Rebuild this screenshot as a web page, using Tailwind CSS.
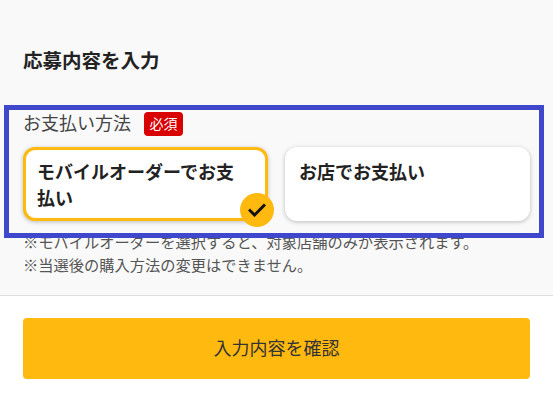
<!DOCTYPE html>
<html lang="ja">
<head>
    <meta charset="UTF-8">
    <meta name="viewport" content="width=device-width, initial-scale=1.0">
    <title>応募内容を入力</title>
    <script src="https://cdn.jsdelivr.net/npm/@tailwindcss/browser@4"></script>
</head>
<body class="relative h-[407px] w-[553px] overflow-hidden bg-white font-['Roboto','Noto_Sans_CJK_JP',sans-serif] text-[#333]">
    <!-- form -->
    <section class="h-[296px] border-b border-[#ddd] bg-[#f9f9f9] px-[23px] pt-[50px]">
        <h2 class="text-[19.5px] leading-[24px] font-bold text-[#222]">応募内容を入力</h2>
        <div class="mt-[37px] flex h-[26px] items-center gap-[13px]">
            <span class="text-[18px] leading-[24px] text-[#444]">お支払い方法</span>
            <span class="flex h-[24px] w-[39px] items-center justify-center rounded-[4px] bg-[#d90000] text-[14px] text-white">必須</span>
        </div>
        <div class="mt-[10px] flex gap-[17px]">
            <div class="relative h-[74px] w-[245px] rounded-[12px] border-[3px] border-[#ffb90f] bg-white pt-[10px] pr-[28px] pl-[11px] shadow-[0_1px_4px_rgba(0,0,0,0.25)]">
                <p class="text-[18px] leading-[26px] font-bold text-[#222]">モバイルオーダーでお支払い</p>
                <span class="absolute right-[-9px] bottom-[-9px] flex h-[34px] w-[34px] items-center justify-center rounded-full bg-[#ffb90f]">
                    <svg class="h-[14px] w-[18px]" viewBox="0 0 18 14" fill="none" stroke="#111" stroke-width="3"><path d="M1 6.5l5.5 5.5L17 1.5"/></svg>
                </span>
            </div>
            <div class="h-[74px] w-[245px] rounded-[12px] bg-white px-[14px] pt-[13px] shadow-[0_1px_4px_rgba(0,0,0,0.25)]">
                <p class="text-[18px] leading-[26px] font-bold text-[#222]">お店でお支払い</p>
            </div>
        </div>
        <div class="mt-[11px] text-[15.25px] leading-[23px] text-[#555]">
            <p>※モバイルオーダーを選択すると、対象店舗のみが表示されます。</p>
            <p>※当選後の購入方法の変更はできません。</p>
        </div>
    </section>
    <!-- footer -->
    <div class="px-[23px] pt-[22px]">
        <button class="flex h-[61px] w-[507px] items-center justify-center rounded-[4px] bg-[#ffb90f] text-[18px] text-[#333]">入力内容を確認</button>
    </div>
    <!-- highlight box drawn over the screenshot -->
    <div class="absolute top-[105px] left-[4px] h-[133px] w-[540px] border-[5px] border-[#3f48cc]"></div>
</body>
</html>
